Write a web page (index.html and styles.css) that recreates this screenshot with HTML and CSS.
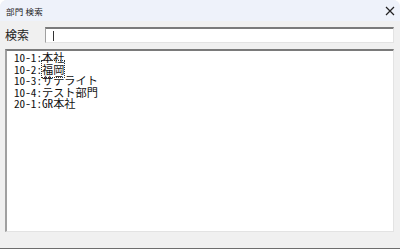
FILE: index.html
```html
<!DOCTYPE html>
<html lang="ja">
<head>
<meta charset="utf-8">
<link rel="stylesheet" href="styles.css">
</head>
<body>
<div class="window">
  <div class="titlebar">
    <span class="title">部門 検索</span>
    <svg class="close" width="10" height="10" viewBox="0 0 10 10"><path d="M1 1L9 9M9 1L1 9" stroke="#222" stroke-width="1.2"/></svg>
  </div>
  <div class="content">
    <div class="search-row">
      <span class="label">検索</span>
      <div class="input"><span class="caret"></span></div>
    </div>
    <div class="list">
      <div class="item">10-1:本社</div>
      <div class="item">10-2:<span class="focus">福岡</span></div>
      <div class="item">10-3:サテライト</div>
      <div class="item">10-4:テスト部門</div>
      <div class="item">20-1:GR本社</div>
    </div>
  </div>
  <div class="bottom"></div>
</div>
</body>
</html>
```
FILE: styles.css
```css
html, body { margin: 0; padding: 0; background: #ffffff; }
.window {
  width: 400px;
  height: 249px;
  background: #f0f0f0;
  border-top-left-radius: 7px;
  border-top-right-radius: 7px;
  overflow: hidden;
  display: flex;
  flex-direction: column;
  font-family: "Noto Sans CJK JP", "Liberation Sans", sans-serif;
  color: #000;
}
.titlebar {
  height: 21px;
  flex: none;
  background: #eef2fa;
  display: flex;
  align-items: center;
  justify-content: space-between;
  padding: 0 6px 0 6px;
}
.title { font-size: 8.5px; color: #222; letter-spacing: 0.2px; }
.close { margin-right: -1px; }
.content {
  flex: 1;
  display: flex;
  flex-direction: column;
  padding: 6px 6px 0 5px;
}
.search-row {
  display: flex;
  align-items: center;
  height: 16px;
}
.label { font-size: 12px; width: 40px; line-height: 16px; color: #222; }
.input {
  flex: 1;
  height: 16px;
  box-sizing: border-box;
  background: #fff;
  border-top: 2px solid #7a7a7a;
  border-left: 1px solid #a0a0a0;
  border-right: 1px solid #e3e3e3;
  border-bottom: 1px solid #e3e3e3;
  display: flex;
  align-items: center;
  padding-left: 7px;
}
.caret { width: 1px; height: 10px; background: #333; }
.list {
  margin-top: 6px;
  height: 183px;
  box-sizing: border-box;
  background: #fff;
  border-top: 2px solid #7a7a7a;
  border-left: 2px solid #a0a0a0;
  border-right: 1px solid #e3e3e3;
  border-bottom: 1px solid #e3e3e3;
  padding: 1px 0 0 7px;
}
.item {
  white-space: nowrap;
  font-family: "Noto Sans Mono CJK JP", "Noto Sans CJK JP", monospace;
  font-size: 11.2px;
  line-height: 11.5px;
  color: #111;
}
.focus { border: 1px dotted #333; margin: -1px; }
.bottom {
  height: 16px;
  flex: none;
  border-bottom: 1px solid #6d6d6d;
}
```
